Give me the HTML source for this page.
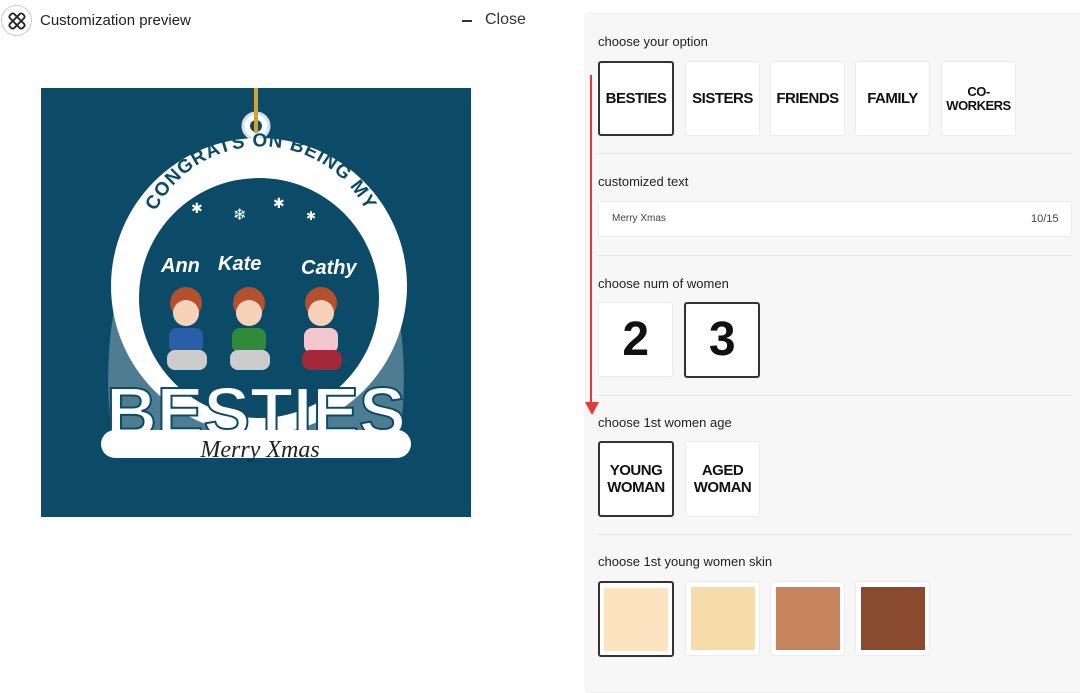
<!DOCTYPE html>
<html><head><meta charset="utf-8"><style>
*{box-sizing:border-box;margin:0;padding:0}
body{width:1080px;height:679px;background:#fff;font-family:"Liberation Sans",sans-serif;position:relative;overflow:hidden;color:#222}
.abs{position:absolute}
.panel{left:585px;top:13px;width:500px;height:680px;background:#f7f7f7;border:1px solid #eee;border-radius:4px}
.lbl{font-size:13px;color:#222}
.tile{position:absolute;width:75px;height:75px;background:#fff;border:1px solid #ececec;border-radius:3px;display:flex;align-items:center;justify-content:center;text-align:center;font-weight:bold;font-size:15px;line-height:17px;color:#111;letter-spacing:-0.5px}
.sel{border:2px solid #333}
.hr{position:absolute;left:598px;width:474px;height:1px;background:#e6e6e6}
.sw{width:64px;height:63px}
</style></head><body>
<div class="abs" style="left:1px;top:5px;width:31px;height:31px;border:1px solid #ccc;border-radius:50%;display:flex;align-items:center;justify-content:center">
<svg width="22" height="22" viewBox="0 0 22 22" fill="none" stroke="#222" stroke-width="1.8"><rect x="2" y="8" width="18" height="6" rx="2" transform="rotate(45 11 11)"/><rect x="2" y="8" width="18" height="6" rx="2" transform="rotate(-45 11 11)"/></svg></div>
<div class="abs" style="left:40px;top:12px;font-size:15px;color:#222">Customization preview</div>
<div class="abs" style="left:462px;top:20px;width:10px;height:1.5px;background:#333"></div>
<div class="abs" style="left:485px;top:11px;font-size:16px;color:#333">Close</div>

<div class="abs" style="left:41px;top:88px;width:430px;height:429px;background:#0c4b68">
<svg width="430" height="429" viewBox="0 0 430 429">
<defs><path id="arc" d="M105 150 A118 118 0 0 1 335 150"/></defs>
<path d="M70 340 Q55 200 120 110 Q170 50 215 50 Q260 50 310 110 Q375 200 360 340 L365 350 Q370 368 340 368 L90 368 Q60 368 65 350 Z" fill="#e8f2f5" opacity=".3"/>
<circle cx="215" cy="38" r="13" fill="#fff" stroke="#cfe3ea" stroke-width="3"/>
<circle cx="215" cy="38" r="6" fill="#0c4b68"/>
<line x1="215" y1="0" x2="215" y2="45" stroke="#d4a030" stroke-width="4"/>
<circle cx="218" cy="198" r="148" fill="#fff"/>
<circle cx="218" cy="210" r="120" fill="#0c4b68"/>
<text font-size="19" font-weight="bold" fill="#0c4b68" letter-spacing="1"><textPath href="#arc" startOffset="50%" text-anchor="middle">CONGRATS ON BEING MY</textPath></text>
<text x="150" y="125" fill="#fff" font-size="14">✱</text><text x="192" y="132" fill="#fff" font-size="16">❄</text><text x="232" y="120" fill="#fff" font-size="14">✱</text><text x="265" y="132" fill="#fff" font-size="12">✱</text>
<text x="120" y="184" font-size="20" font-style="italic" font-weight="bold" fill="#fff">Ann</text>
<text x="177" y="182" font-size="20" font-style="italic" font-weight="bold" fill="#fff">Kate</text>
<text x="260" y="186" font-size="20" font-style="italic" font-weight="bold" fill="#fff">Cathy</text>
<g><circle cx="145" cy="215" r="16" fill="#b5502e"/><circle cx="145" cy="225" r="13" fill="#f7d2b8"/><rect x="128" y="240" width="34" height="25" rx="8" fill="#2a5fa8"/><rect x="126" y="262" width="40" height="20" rx="8" fill="#ccc"/></g>
<g><circle cx="208" cy="215" r="16" fill="#b5502e"/><circle cx="208" cy="225" r="13" fill="#f7d2b8"/><rect x="191" y="240" width="34" height="25" rx="8" fill="#2f8a3a"/><rect x="189" y="262" width="40" height="20" rx="8" fill="#ccc"/></g>
<g><circle cx="280" cy="215" r="16" fill="#b5502e"/><circle cx="280" cy="225" r="13" fill="#f7d2b8"/><rect x="263" y="240" width="34" height="25" rx="8" fill="#f2c6cc"/><rect x="261" y="262" width="40" height="20" rx="8" fill="#a3283a"/></g>
<text x="215" y="348" text-anchor="middle" font-size="70" font-weight="bold" fill="#fff" stroke="#0c4b68" stroke-width="2" font-family="Liberation Sans">BESTIES</text>
<rect x="60" y="342" width="310" height="28" rx="14" fill="#fff"/>
<text x="219" y="369" text-anchor="middle" font-size="24" font-style="italic" fill="#222" font-family="Liberation Serif">Merry Xmas</text>
</svg></div>

<div class="abs panel"></div>
<div class="abs" style="left:590px;top:75px;width:2px;height:330px;background:#e53935"></div>
<svg class="abs" style="left:585px;top:402px" width="14" height="14"><path d="M0 0 L14 0 L7 13 Z" fill="#e53935"/></svg>

<div class="abs lbl" style="left:598px;top:34px">choose your option</div>
<div class="tile sel" style="left:598px;top:61px;width:76px">BESTIES</div>
<div class="tile" style="left:685px;top:61px">SISTERS</div>
<div class="tile" style="left:770px;top:61px">FRIENDS</div>
<div class="tile" style="left:855px;top:61px">FAMILY</div>
<div class="tile" style="left:941px;top:61px;font-size:13px;line-height:14px">CO-<br>WORKERS</div>
<div class="hr" style="top:153px"></div>

<div class="abs lbl" style="left:598px;top:174px">customized text</div>
<div class="abs" style="left:598px;top:201px;width:474px;height:36px;background:#fff;border:1px solid #ececec;border-radius:3px"></div>
<div class="abs" style="left:612px;top:213px;font-size:10px;color:#444">Merry Xmas</div>
<div class="abs" style="left:1031px;top:213px;font-size:11px;color:#444">10/15</div>
<div class="hr" style="top:255px"></div>

<div class="abs lbl" style="left:598px;top:276px">choose num of women</div>
<div class="tile" style="left:598px;top:302px;font-size:48px;line-height:48px">2</div>
<div class="tile sel" style="left:684px;top:302px;width:76px;height:76px;font-size:48px;line-height:48px">3</div>
<div class="hr" style="top:395px"></div>

<div class="abs lbl" style="left:598px;top:415px">choose 1st women age</div>
<div class="tile sel" style="left:598px;top:441px;width:76px;height:76px;font-size:15px">YOUNG<br>WOMAN</div>
<div class="tile" style="left:685px;top:441px;height:76px">AGED<br>WOMAN</div>
<div class="hr" style="top:534px"></div>

<div class="abs lbl" style="left:598px;top:554px">choose 1st young women skin</div>
<div class="tile sel" style="left:598px;top:581px;width:76px;height:76px"><div class="sw" style="background:#fde3bf"></div></div>
<div class="tile" style="left:685px;top:581px"><div class="sw" style="background:#f5dca8"></div></div>
<div class="tile" style="left:770px;top:581px"><div class="sw" style="background:#c5845c"></div></div>
<div class="tile" style="left:855px;top:581px"><div class="sw" style="background:#8a4a2e"></div></div>
</body></html>
